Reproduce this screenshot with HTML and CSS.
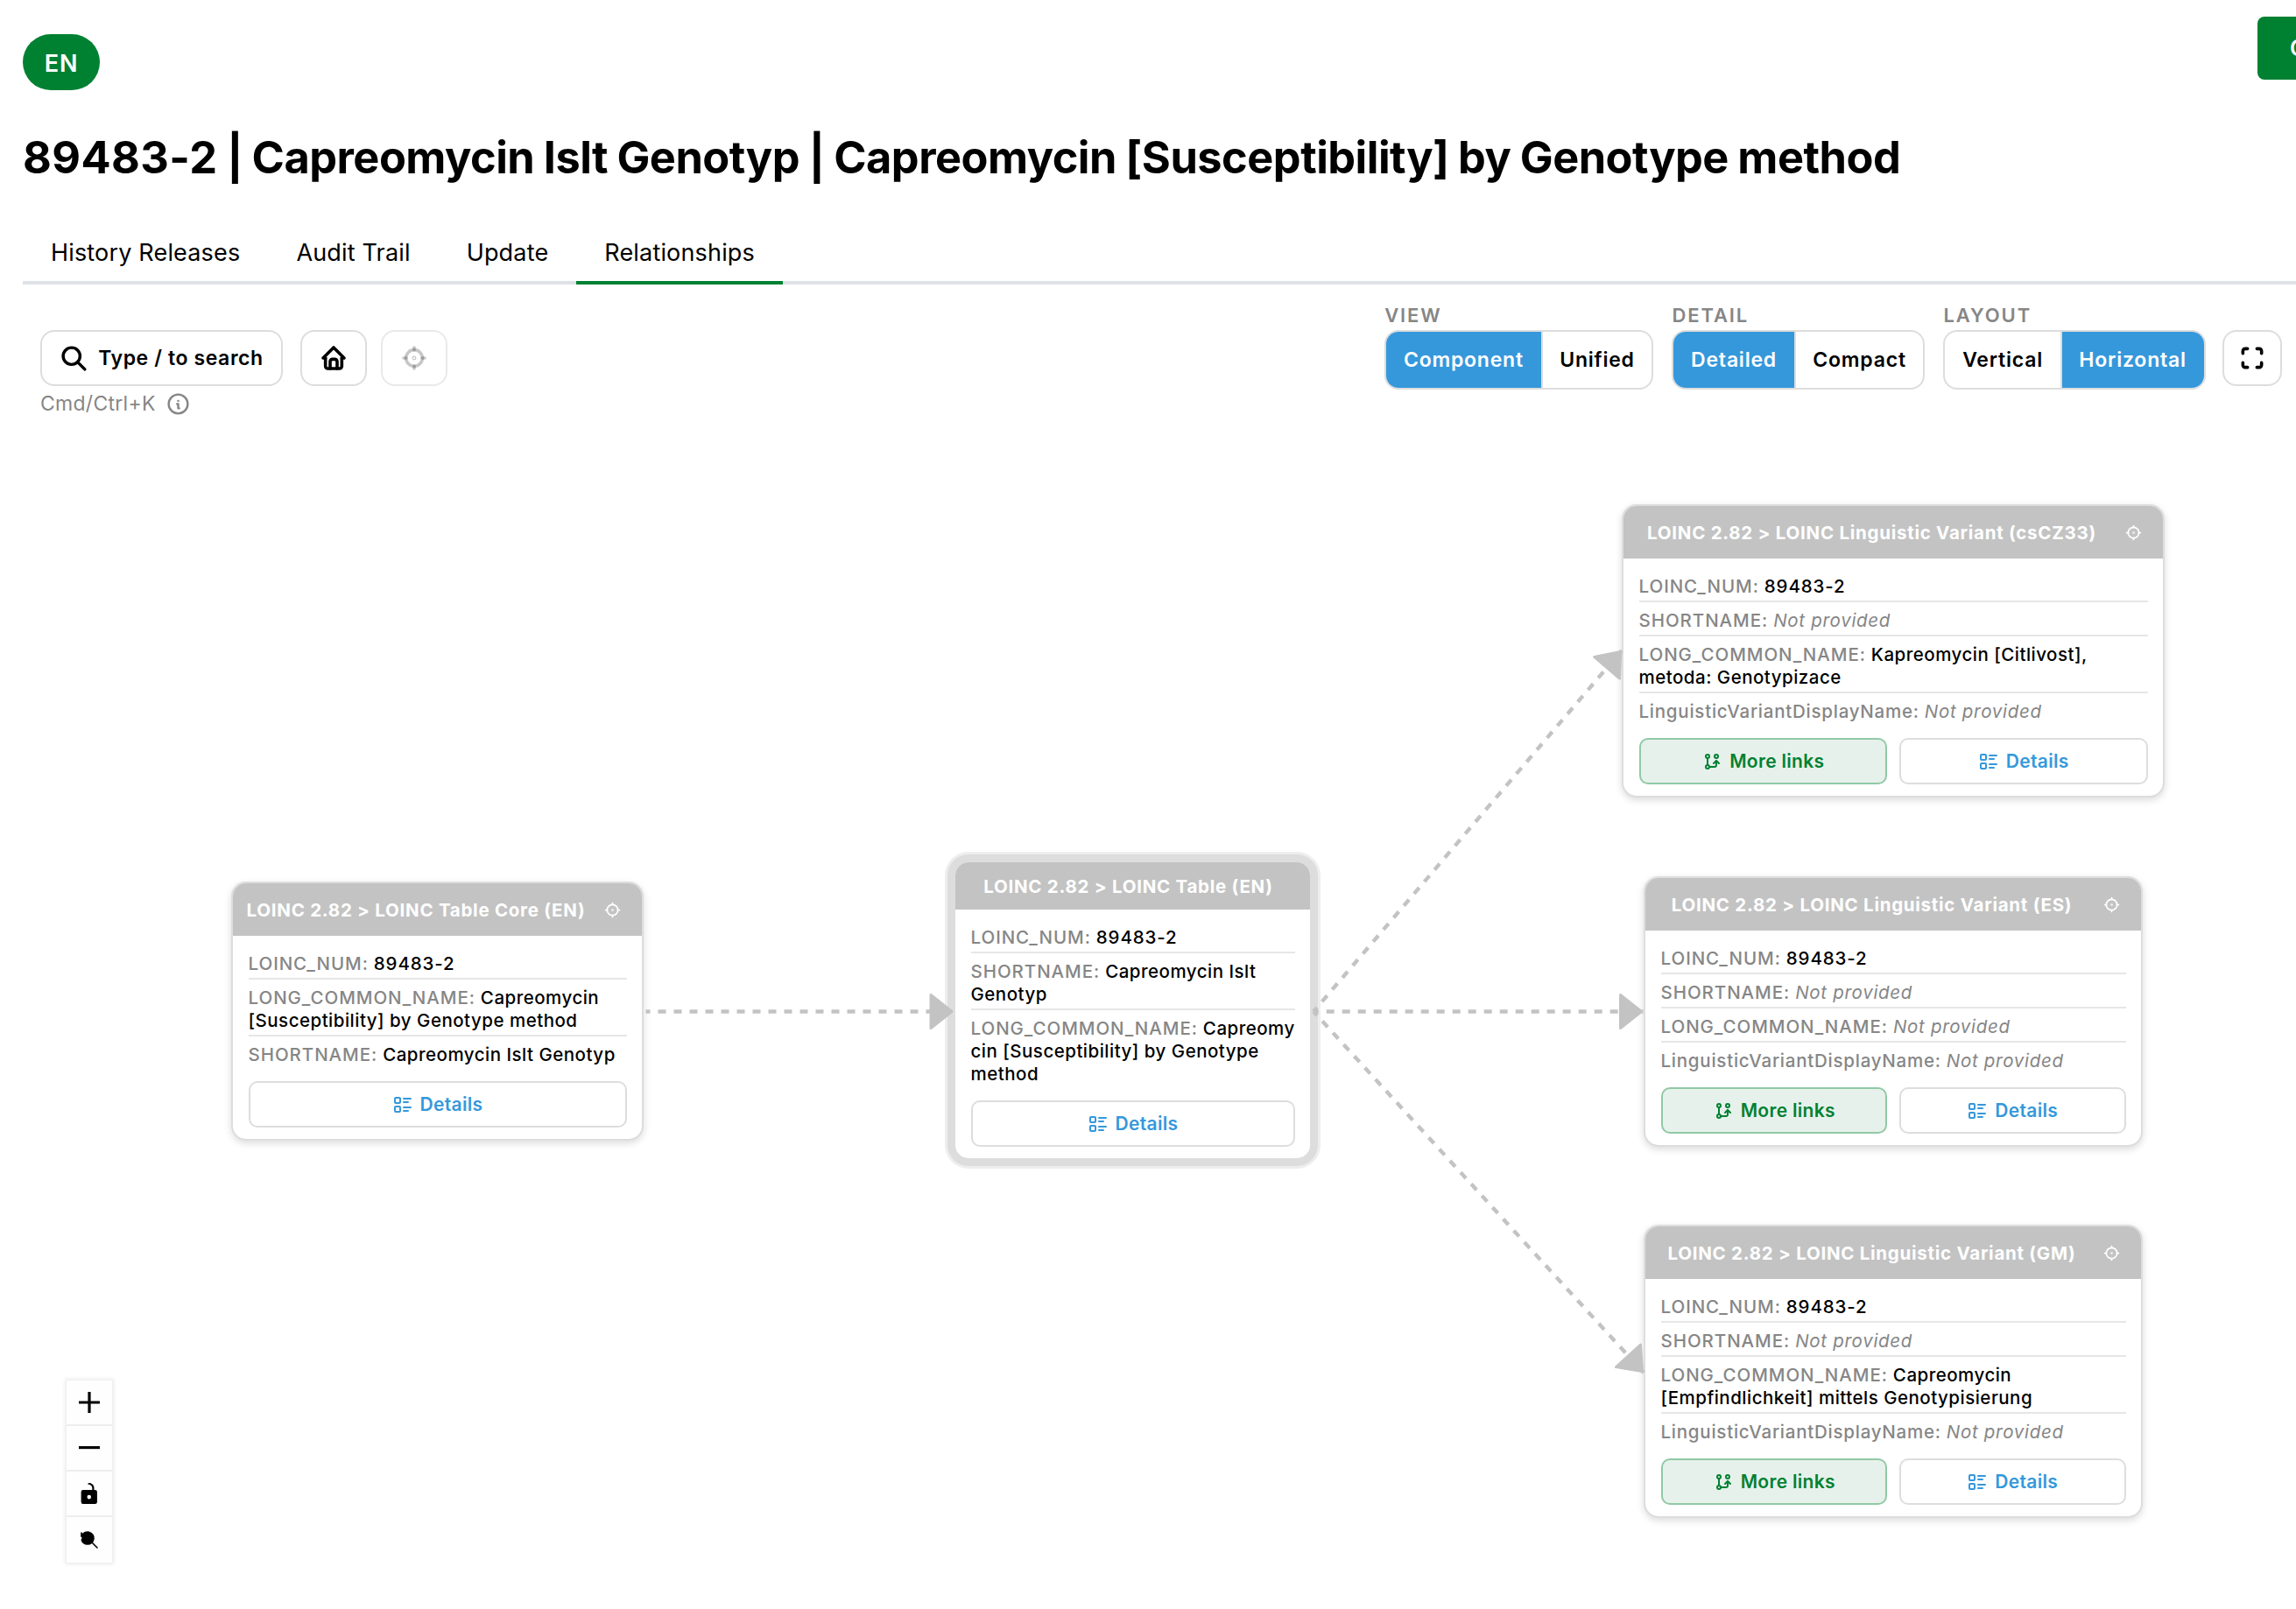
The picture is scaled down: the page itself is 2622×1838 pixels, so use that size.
FILE: index.html
```html
<!DOCTYPE html>
<html lang="en">

<head>
    <meta charset="UTF-8">
    <meta name="viewport" content="width=device-width, initial-scale=1.0">
    <title>89483-2 | Relationships</title>
    <link rel="stylesheet" href="styles.css">
</head>

<body>
    <!-- icons -->
    <svg class="sprite">
        <symbol id="i-search" viewBox="0 0 24 24">
            <circle cx="10" cy="10" r="7" />
            <path d="M21 21l-6-6" />
        </symbol>
        <symbol id="i-home" viewBox="0 0 24 24">
            <path d="M5 12H3l9-9 9 9h-2" />
            <path d="M5 12v7a2 2 0 0 0 2 2h10a2 2 0 0 0 2-2v-7" />
            <path d="M9 21v-6a2 2 0 0 1 2-2h2a2 2 0 0 1 2 2v6" />
        </symbol>
        <symbol id="i-focus" viewBox="0 0 24 24">
            <circle cx="12" cy="12" r=".5" />
            <circle cx="12" cy="12" r="7" />
            <path d="M12 3v2" />
            <path d="M3 12h2" />
            <path d="M12 19v2" />
            <path d="M19 12h2" />
        </symbol>
        <symbol id="i-info" viewBox="0 0 24 24">
            <circle cx="12" cy="12" r="9" />
            <path d="M12 9h.01" />
            <path d="M11 12h1v4h1" />
        </symbol>
        <symbol id="i-full" viewBox="0 0 24 24">
            <path d="M4 8V6a2 2 0 0 1 2-2h2" />
            <path d="M4 16v2a2 2 0 0 0 2 2h2" />
            <path d="M16 4h2a2 2 0 0 1 2 2v2" />
            <path d="M16 20h2a2 2 0 0 0 2-2v-2" />
        </symbol>
        <symbol id="i-details" viewBox="0 0 24 24">
            <path d="M13 5h8M13 9h5M13 15h8M13 19h5" />
            <rect x="3" y="4" width="6" height="6" rx="1" />
            <rect x="3" y="14" width="6" height="6" rx="1" />
        </symbol>
        <symbol id="i-branch" viewBox="0 0 24 24">
            <circle cx="7" cy="18" r="2" />
            <circle cx="7" cy="6" r="2" />
            <circle cx="17" cy="6" r="2" />
            <path d="M7 8v8" />
            <path d="M9 18h6a2 2 0 0 0 2-2v-5" />
            <path d="M14 14l3-3 3 3" />
        </symbol>
    </svg>

    <div class="page">
        <!-- relationship graph -->
        <div class="graph">
            <div class="node node-core">
                <div class="node-head">
                    <span class="node-title">LOINC 2.82 &gt; LOINC Table Core (EN)</span>
                    <svg class="icon node-focus"><use href="#i-focus" /></svg>
                </div>
                <div class="node-body">
                    <div class="row"><span class="key">LOINC_NUM:</span> <span class="code">89483-2</span></div>
                    <div class="row"><span class="key">LONG_COMMON_NAME:</span> Capreomycin<br>[Susceptibility] by Genotype method</div>
                    <div class="row"><span class="key">SHORTNAME:</span> Capreomycin Islt Genotyp</div>
                    <div class="actions">
                        <button class="btn"><svg class="icon"><use href="#i-details" /></svg>Details</button>
                    </div>
                </div>
            </div>

            <div class="node node-table">
                <div class="node-head">
                    <span class="node-title">LOINC 2.82 &gt; LOINC Table (EN)</span>
                </div>
                <div class="node-body">
                    <div class="row"><span class="key">LOINC_NUM:</span> <span class="code">89483-2</span></div>
                    <div class="row"><span class="key">SHORTNAME:</span> Capreomycin Islt<br>Genotyp</div>
                    <div class="row"><span class="key">LONG_COMMON_NAME:</span> Capreomy<br>cin [Susceptibility] by Genotype<br>method</div>
                    <div class="actions">
                        <button class="btn"><svg class="icon"><use href="#i-details" /></svg>Details</button>
                    </div>
                </div>
            </div>

            <div class="node node-cs">
                <div class="node-head">
                    <span class="node-title">LOINC 2.82 &gt; LOINC Linguistic Variant (csCZ33)</span>
                    <svg class="icon node-focus"><use href="#i-focus" /></svg>
                </div>
                <div class="node-body">
                    <div class="row"><span class="key">LOINC_NUM:</span> <span class="code">89483-2</span></div>
                    <div class="row"><span class="key">SHORTNAME:</span> <em>Not provided</em></div>
                    <div class="row"><span class="key">LONG_COMMON_NAME:</span> Kapreomycin [Citlivost],<br>metoda: Genotypizace</div>
                    <div class="row"><span class="key key-mixed">LinguisticVariantDisplayName:</span> <em>Not provided</em></div>
                    <div class="actions">
                        <button class="btn btn-more"><svg class="icon"><use href="#i-branch" /></svg>More links</button>
                        <button class="btn"><svg class="icon"><use href="#i-details" /></svg>Details</button>
                    </div>
                </div>
            </div>

            <div class="node node-es">
                <div class="node-head">
                    <span class="node-title">LOINC 2.82 &gt; LOINC Linguistic Variant (ES)</span>
                    <svg class="icon node-focus"><use href="#i-focus" /></svg>
                </div>
                <div class="node-body">
                    <div class="row"><span class="key">LOINC_NUM:</span> <span class="code">89483-2</span></div>
                    <div class="row"><span class="key">SHORTNAME:</span> <em>Not provided</em></div>
                    <div class="row"><span class="key">LONG_COMMON_NAME:</span> <em>Not provided</em></div>
                    <div class="row"><span class="key key-mixed">LinguisticVariantDisplayName:</span> <em>Not provided</em></div>
                    <div class="actions">
                        <button class="btn btn-more"><svg class="icon"><use href="#i-branch" /></svg>More links</button>
                        <button class="btn"><svg class="icon"><use href="#i-details" /></svg>Details</button>
                    </div>
                </div>
            </div>

            <div class="node node-gm">
                <div class="node-head">
                    <span class="node-title">LOINC 2.82 &gt; LOINC Linguistic Variant (GM)</span>
                    <svg class="icon node-focus"><use href="#i-focus" /></svg>
                </div>
                <div class="node-body">
                    <div class="row"><span class="key">LOINC_NUM:</span> <span class="code">89483-2</span></div>
                    <div class="row"><span class="key">SHORTNAME:</span> <em>Not provided</em></div>
                    <div class="row"><span class="key">LONG_COMMON_NAME:</span> Capreomycin<br>[Empfindlichkeit] mittels Genotypisierung</div>
                    <div class="row"><span class="key key-mixed">LinguisticVariantDisplayName:</span> <em>Not provided</em></div>
                    <div class="actions">
                        <button class="btn btn-more"><svg class="icon"><use href="#i-branch" /></svg>More links</button>
                        <button class="btn"><svg class="icon"><use href="#i-details" /></svg>Details</button>
                    </div>
                </div>
            </div>

            <!-- edges -->
            <svg class="edges" viewBox="0 0 2622 1838">
                <defs>
                    <marker id="arrow" markerUnits="userSpaceOnUse" markerWidth="40" markerHeight="50" viewBox="-34 -25 40 50" orient="auto">
                        <path d="M-26 -19L-2 0L-26 19Z" />
                    </marker>
                </defs>
                <path class="edge" stroke-dashoffset="4" marker-end="url(#arrow)" d="M737.5 1155.5H1089" />
                <path class="edge" stroke-dashoffset="3" marker-end="url(#arrow)" d="M1499.7 1155.5H1876.5" />
                <path class="edge" stroke-dashoffset="3" marker-end="url(#arrow)" d="M1500 1155.5L1852 743" />
                <path class="edge" stroke-dashoffset="3" marker-end="url(#arrow)" d="M1500 1155.5L1877 1568" />
            </svg>

            <!-- zoom controls -->
            <div class="controls">
                <button><svg viewBox="0 0 32 32"><path d="M32 18.133H18.133V32h-4.266V18.133H0v-4.266h13.867V0h4.266v13.867H32z" /></svg></button>
                <button><svg viewBox="0 0 32 5"><path d="M0 0h32v4.2H0z" /></svg></button>
                <button><svg viewBox="0 0 25 32"><path d="M21.333 10.667H19.81V7.619C19.81 3.429 16.38 0 12.19 0c-4.114 1.828-1.37 2.133.305 2.437 1.676.305 4.42 2.59 4.42 5.181v3.048H3.047A3.056 3.056 0 000 13.714v15.238A3.056 3.056 0 003.048 32h18.285a3.056 3.056 0 003.048-3.048V13.714a3.056 3.056 0 00-3.048-3.047zM12.19 24.533a3.056 3.056 0 01-3.047-3.047 3.056 3.056 0 013.047-3.048 3.056 3.056 0 013.048 3.048 3.056 3.056 0 01-3.048 3.047z" /></svg></button>
                <button><svg class="zoom-reset" viewBox="0 0 24 24"><path d="M21 21l-6-6" /><path d="M3.268 12.043A7.017 7.017 0 0 0 9.902 17a7.012 7.012 0 0 0 7.043-6.131 7 7 0 0 0-5.314-7.672A7.021 7.021 0 0 0 3.39 7.6" /><path d="M3 4v4h4" /></svg></button>
            </div>
        </div>

        <div class="topbar">
            <span class="lang">EN</span>
            <button class="main-btn">C</button>
        </div>

        <h1><span class="code">89483-2</span> | Capreomycin Islt Genotyp | Capreomycin [Susceptibility] by Genotype method</h1>

        <div class="tabs">
            <a class="tab">History Releases</a>
            <a class="tab">Audit Trail</a>
            <a class="tab">Update</a>
            <a class="tab active">Relationships</a>
        </div>

        <div class="toolbar">
            <div class="tools">
                <div class="tool-row">
                    <button class="tool tool-search"><svg class="icon"><use href="#i-search" /></svg>Type / to search</button>
                    <button class="tool"><svg class="icon"><use href="#i-home" /></svg></button>
                    <button class="tool disabled"><svg class="icon"><use href="#i-focus" /></svg></button>
                </div>
                <div class="hint">Cmd/Ctrl+K <svg class="icon"><use href="#i-info" /></svg></div>
            </div>
            <div class="options">
                <div class="option">
                    <div class="option-label">VIEW</div>
                    <div class="toggle">
                        <button class="on">Component</button>
                        <button>Unified</button>
                    </div>
                </div>
                <div class="option">
                    <div class="option-label">DETAIL</div>
                    <div class="toggle">
                        <button class="on">Detailed</button>
                        <button>Compact</button>
                    </div>
                </div>
                <div class="option">
                    <div class="option-label">LAYOUT</div>
                    <div class="toggle">
                        <button>Vertical</button>
                        <button class="on">Horizontal</button>
                    </div>
                </div>
                <button class="tool tool-full"><svg class="icon"><use href="#i-full" /></svg></button>
            </div>
        </div>
    </div>
</body>

</html>
```
FILE: styles.css
```css
* {
    padding: 0;
    margin: 0;
    box-sizing: border-box;
}

body {
    font-family: Inter, "Noto Sans", sans-serif;
    background-color: #fff;
    color: #000;
}

button {
    font-family: inherit;
    color: inherit;
    background: none;
    border: 0;
    cursor: pointer;
}

.sprite {
    display: none;
}

.icon {
    flex: none;
    fill: none;
    stroke: currentColor;
    stroke-width: 2;
    stroke-linecap: round;
    stroke-linejoin: round;
}

.page {
    position: relative;
    height: 1838px;
    overflow: hidden;
}

/* header */
.topbar {
    display: flex;
    justify-content: space-between;
    align-items: flex-start;
    padding: 19px 0 0 26px;
}

.lang {
    width: 88px;
    height: 64px;
    margin-top: 20px;
    border-radius: 32px;
    background-color: #008132;
    color: #fff;
    font-size: 27px;
    font-weight: 600;
    letter-spacing: 0.8px;
    line-height: 67px;
    text-align: center;
}

.main-btn {
    width: 44px;
    height: 72px;
    padding-left: 37px;
    border-radius: 8px 0 0 8px;
    background-color: #008132;
    color: #fff;
    font-size: 25px;
    font-weight: 600;
    text-align: left;
    overflow: hidden;
}

h1 {
    margin: 47px 0 0 26px;
    font-size: 50.5px;
    font-weight: 700;
    letter-spacing: -0.52px;
    line-height: 60px;
    white-space: nowrap;
    word-spacing: -1px;
}

h1 .code {
    letter-spacing: 0.4px;
}

.tabs {
    display: flex;
    margin: 59px 0 0 26px;
    border-bottom: 4px solid #dee2e6;
}

.tab {
    padding: 0 32px 12px;
    margin-bottom: -4px;
    border-bottom: 4px solid transparent;
    font-size: 27px;
    letter-spacing: 0.17px;
    line-height: 40px;
}

.tab.active {
    border-color: #008132;
}

/* toolbar */
.toolbar {
    position: relative;
    display: flex;
    justify-content: space-between;
    align-items: flex-start;
    padding: 18px 16px 0 46px;
}

.tools {
    padding-top: 34px;
}

.tool-row {
    display: flex;
}

.tool {
    display: flex;
    align-items: center;
    justify-content: center;
    width: 76px;
    height: 64px;
    margin-left: 16px;
    border: 2px solid #ddd;
    border-radius: 16px;
    background-color: #fff;
}

.tool .icon {
    width: 32px;
    height: 32px;
    stroke-width: 2.7;
}

.tool-search {
    width: 277px;
    margin: 0 4px 0 0;
    font-size: 23px;
    font-weight: 600;
    letter-spacing: 0.6px;
}

.tool-search .icon {
    width: 33px;
    height: 33px;
    margin-right: 11px;
    stroke-width: 2.5;
}

.tool.disabled {
    border-color: #e9e9e9;
}

.disabled .icon {
    color: rgba(0, 0, 0, 0.22);
}

.hint {
    display: flex;
    align-items: center;
    height: 40px;
    color: #868686;
    font-size: 23px;
    letter-spacing: 0.28px;
}

.hint .icon {
    width: 29px;
    height: 29px;
    margin-left: 11px;
}

.options {
    display: flex;
    align-items: flex-end;
    gap: 21px;
}

.option-label {
    color: #868686;
    font-size: 22px;
    font-weight: 600;
    letter-spacing: 1.9px;
    line-height: 34px;
}

.toggle {
    display: flex;
    height: 68px;
    border: 2px solid #ddd;
    border-radius: 16px;
    background-color: #fff;
    overflow: hidden;
}

.toggle button {
    padding: 0 19.7px;
    font-size: 23px;
    font-weight: 600;
    letter-spacing: 0.78px;
    white-space: nowrap;
}

.toggle button + button {
    border-left: 2px solid #ddd;
}

.toggle .on {
    background-color: #3598db;
    color: #fff;
}

.tool-full {
    width: 68px;
    margin: 0 0 4px -1.5px;
}

/* graph */
.graph {
    position: absolute;
    top: 0;
    left: 0;
    width: 2622px;
    height: 1838px;
}

.edges {
    position: absolute;
    top: 0;
    left: 0;
    width: 2622px;
    height: 1838px;
}

.edge {
    fill: none;
    stroke: #c3c3c3;
    stroke-width: 4.4;
    stroke-dasharray: 9;
}

.edges marker path {
    fill: #c3c3c3;
    stroke: #c3c3c3;
    stroke-width: 3;
    stroke-linejoin: round;
}

.node {
    position: absolute;
    border: 2px solid #ddd;
    border-radius: 17px;
    background-color: #fff;
    box-shadow: 0 3px 9px rgba(0, 0, 0, 0.14);
    overflow: hidden;
}

.node-core {
    left: 264px;
    top: 1007px;
    width: 471px;
}

.node-table {
    left: 1089px;
    top: 983px;
    width: 409px;
    box-shadow: 0 0 0 7px #ddd, 0 0 0 10px #eee;
}

.node-cs {
    left: 1852px;
    top: 576px;
    width: 620px;
}

.node-es {
    left: 1877px;
    top: 1001px;
    width: 570px;
}

.node-gm {
    left: 1877px;
    top: 1399px;
    width: 570px;
}

.node-head {
    display: flex;
    align-items: center;
    height: 60px;
    padding-right: 23px;
    background-color: #c3c3c3;
    color: #fff;
}

.node-table .node-head {
    height: 54px;
    padding-right: 10px;
}

.node-title {
    flex: 1;
    margin-right: 5px;
    font-size: 20.5px;
    font-weight: 700;
    letter-spacing: 0.73px;
    text-align: center;
    white-space: nowrap;
}

.node-table .node-title {
    margin-right: 0;
}

.node-focus {
    width: 21px;
    height: 21px;
}

.node-body {
    padding: 11px 17.5px 13px;
}

.row {
    padding: 7.5px 0 3.5px;
    border-bottom: 2px solid #e6e6e6;
    font-size: 20.5px;
    font-weight: 500;
    letter-spacing: 0.49px;
    line-height: 26px;
    white-space: nowrap;
}

.row:nth-last-child(2) {
    border-bottom: 0;
}

.row .code {
    letter-spacing: 0.9px;
}

.key {
    color: #868686;
    letter-spacing: 0.95px;
}

.key-mixed {
    letter-spacing: 0.76px;
}

.row em {
    color: #868686;
    font-weight: 400;
    letter-spacing: 0.7px;
}

.actions {
    display: flex;
    gap: 14px;
    margin-top: 14px;
}

.btn {
    display: flex;
    flex: 1;
    align-items: center;
    justify-content: center;
    gap: 8px;
    height: 53px;
    border: 2px solid #ddd;
    border-radius: 10px;
    background-color: #fff;
    color: #3598db;
    font-size: 21px;
    font-weight: 600;
    letter-spacing: 0.3px;
}

.btn .icon {
    width: 24px;
    height: 24px;
}

.btn-more {
    border-color: #90c9a6;
    background-color: #e7f1eb;
    color: #008132;
}

/* zoom controls */
.controls {
    position: absolute;
    left: 76px;
    top: 1577px;
    width: 52px;
    box-shadow: 0 0 4px 2px rgba(0, 0, 0, 0.08);
}

.controls button {
    display: flex;
    align-items: center;
    justify-content: center;
    width: 52px;
    height: 52px;
    background-color: #fefefe;
    border-bottom: 2px solid #eee;
}

.controls button:last-child {
    border-bottom: 0;
}

.controls svg {
    max-width: 24px;
    max-height: 24px;
    width: 100%;
}

.zoom-reset {
    stroke: #000;
    stroke-width: 1.6;
    stroke-linecap: round;
}
```
